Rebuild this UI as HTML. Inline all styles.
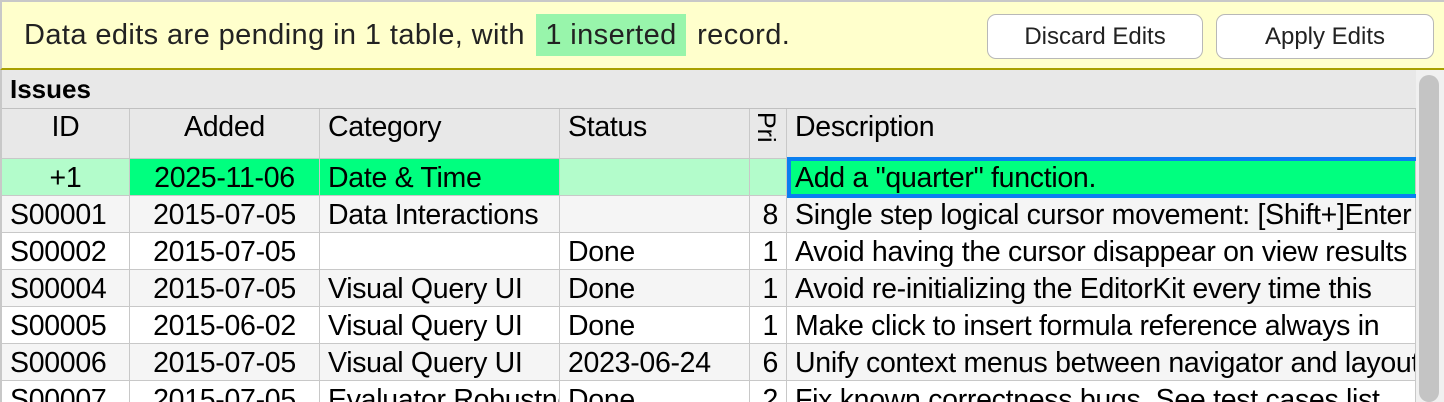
<!DOCTYPE html>
<html><head><meta charset="utf-8"><style>
*{margin:0;padding:0;box-sizing:border-box}
html,body{width:1444px;height:402px;overflow:hidden}
body{background:#fff;font-family:"Liberation Sans",sans-serif;position:relative}
.banner{position:absolute;left:0;top:0;width:1444px;height:70px;background:#ffffcc;border-top:2px solid #c8c8c8;border-left:2px solid #c8c8c8;border-bottom:2px solid #a8a000}
.msg{position:absolute;left:22px;top:17px;font-size:29px;color:#222;white-space:nowrap;letter-spacing:0.4px}
.hl{background:#98f5ab;padding:5px 9px;margin:0 3px}
.btn{position:absolute;top:12px;height:45px;border:1px solid #b8b8b8;border-radius:9px;background:#fff;font-size:24px;color:#222;text-align:center;line-height:43px}
.t{position:absolute;left:0;top:70px;width:1416px;height:332px;background:#e8e8e8;border-left:2px solid #c8c8c8}
.c{position:absolute;font-size:28.5px;color:#000;white-space:nowrap;overflow:hidden;line-height:39px;border-right:1px solid #c8c8c8;border-bottom:1px solid #c8c8c8;padding:0 8px;letter-spacing:-0.3px}
.r{text-align:right}.ce{text-align:center}
.sb{position:absolute;left:1416px;top:70px;width:28px;height:332px;background:#f0f0f0}
.th{position:absolute;left:1419px;top:75px;width:20px;height:327px;background:#c4c4c4;border-radius:10px}
</style></head><body>
<div class="banner">
<div class="msg">Data edits are pending in 1 table, with <span class="hl">1 inserted</span> record.</div>
<div class="btn" style="left:985px;width:216px">Discard Edits</div>
<div class="btn" style="left:1214px;width:218px">Apply Edits</div>
</div>
<div class="t"></div>
<div style="position:absolute;left:10px;top:74px;font-size:26px;font-weight:bold">Issues</div>
<div style="position:absolute;left:2px;top:108px;width:1414px;height:1px;background:#c0c0c0"></div>
<div id="g"></div>
<div class="sb"></div><div class="th"></div>
<script>
var cols=[[2,130,'ce'],[130,320,'ce'],[320,560,''],[560,750,''],[750,787,'r'],[787,1416,'']];
var rows=[
['ID','Added','Category','Status','','Description'],
['+1','2025-11-06','Date & Time','','','Add a "quarter" function.'],
['S00001','2015-07-05','Data Interactions','','8','Single step logical cursor movement: [Shift+]Enter'],
['S00002','2015-07-05','','Done','1','Avoid having the cursor disappear on view results'],
['S00004','2015-07-05','Visual Query UI','Done','1','Avoid re-initializing the EditorKit every time this'],
['S00005','2015-06-02','Visual Query UI','Done','1','Make click to insert formula reference always in'],
['S00006','2015-07-05','Visual Query UI','2023-06-24','6','Unify context menus between navigator and layout'],
['S00007','2015-07-05','Evaluator Robustness','Done','2','Fix known correctness bugs. See test cases list']];
var h='';
rows.forEach(function(r,i){
 var top=i==0?109:159+(i-1)*37, ht=i==0?50:37;
 r.forEach(function(v,j){
  var c=cols[j],bg,al=c[2];
  if(i==0){bg='#e8e8e8';al=j<2?'ce':'';}
  else if(i==1){bg=(j==1||j==2||j==5)?'#00ff7f':'#b3fccb';}
  else bg=(i%2==0)?'#f5f5f5':'#fff';
  if(i>1&&j==0)al='';
  var lh=i==0?'line-height:36px;':'';
  h+='<div class="c '+al+'" style="left:'+c[0]+'px;top:'+top+'px;width:'+(c[1]-c[0])+'px;height:'+ht+'px;background:'+bg+';'+lh+'">'+v.replace(/&/g,'&amp;')+'</div>';
 });
});
document.getElementById('g').innerHTML=h;
</script>
<div style="position:absolute;top:112px;font-size:25px;transform:rotate(90deg);transform-origin:0 0;left:780px">Pri</div>
<div style="position:absolute;left:787px;top:157px;width:629px;height:41px;border:4px solid #0a7ff0;border-right:none"></div>
</body></html>
